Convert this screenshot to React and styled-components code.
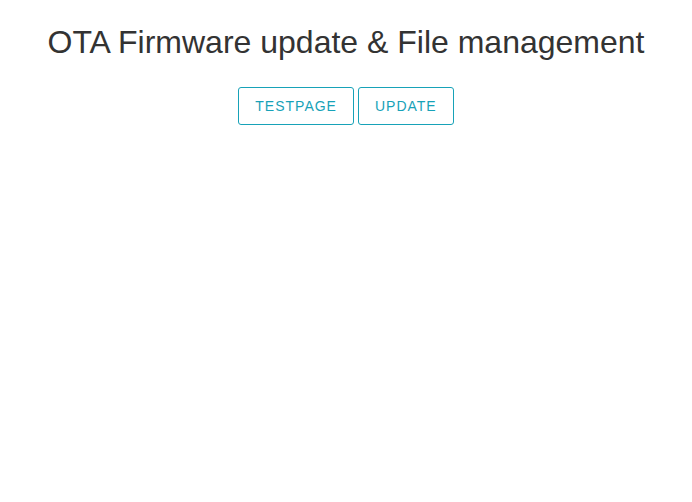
import styled, { createGlobalStyle } from "styled-components";

const GlobalStyle = createGlobalStyle`
  body {
    margin: 0;
    background: #fff;
    font-family: "Liberation Sans", Arial, sans-serif;
  }
`;

const Page = styled.div`
  display: flex;
  flex-direction: column;
  align-items: center;
  padding-top: 22px;
`;

const Title = styled.h1`
  margin: 0;
  font-size: 32px;
  font-weight: 400;
  line-height: 40px;
  color: #333;
`;

const Actions = styled.div`
  display: flex;
  gap: 4px;
  margin-top: 25px;
`;

const OutlineButton = styled.button`
  height: 38px;
  padding: 0 16px;
  border: 1px solid #17a2b8;
  border-radius: 3px;
  background: transparent;
  color: #17a2b8;
  font-family: "Liberation Sans", Arial, sans-serif;
  font-size: 14px;
  letter-spacing: 1px;
  text-transform: uppercase;
  cursor: pointer;
`;

export default function App() {
  return (
    <>
      <GlobalStyle />
      <Page>
        <Title>OTA Firmware update &amp; File management</Title>
        <Actions>
          <OutlineButton>Testpage</OutlineButton>
          <OutlineButton>Update</OutlineButton>
        </Actions>
      </Page>
    </>
  );
}
